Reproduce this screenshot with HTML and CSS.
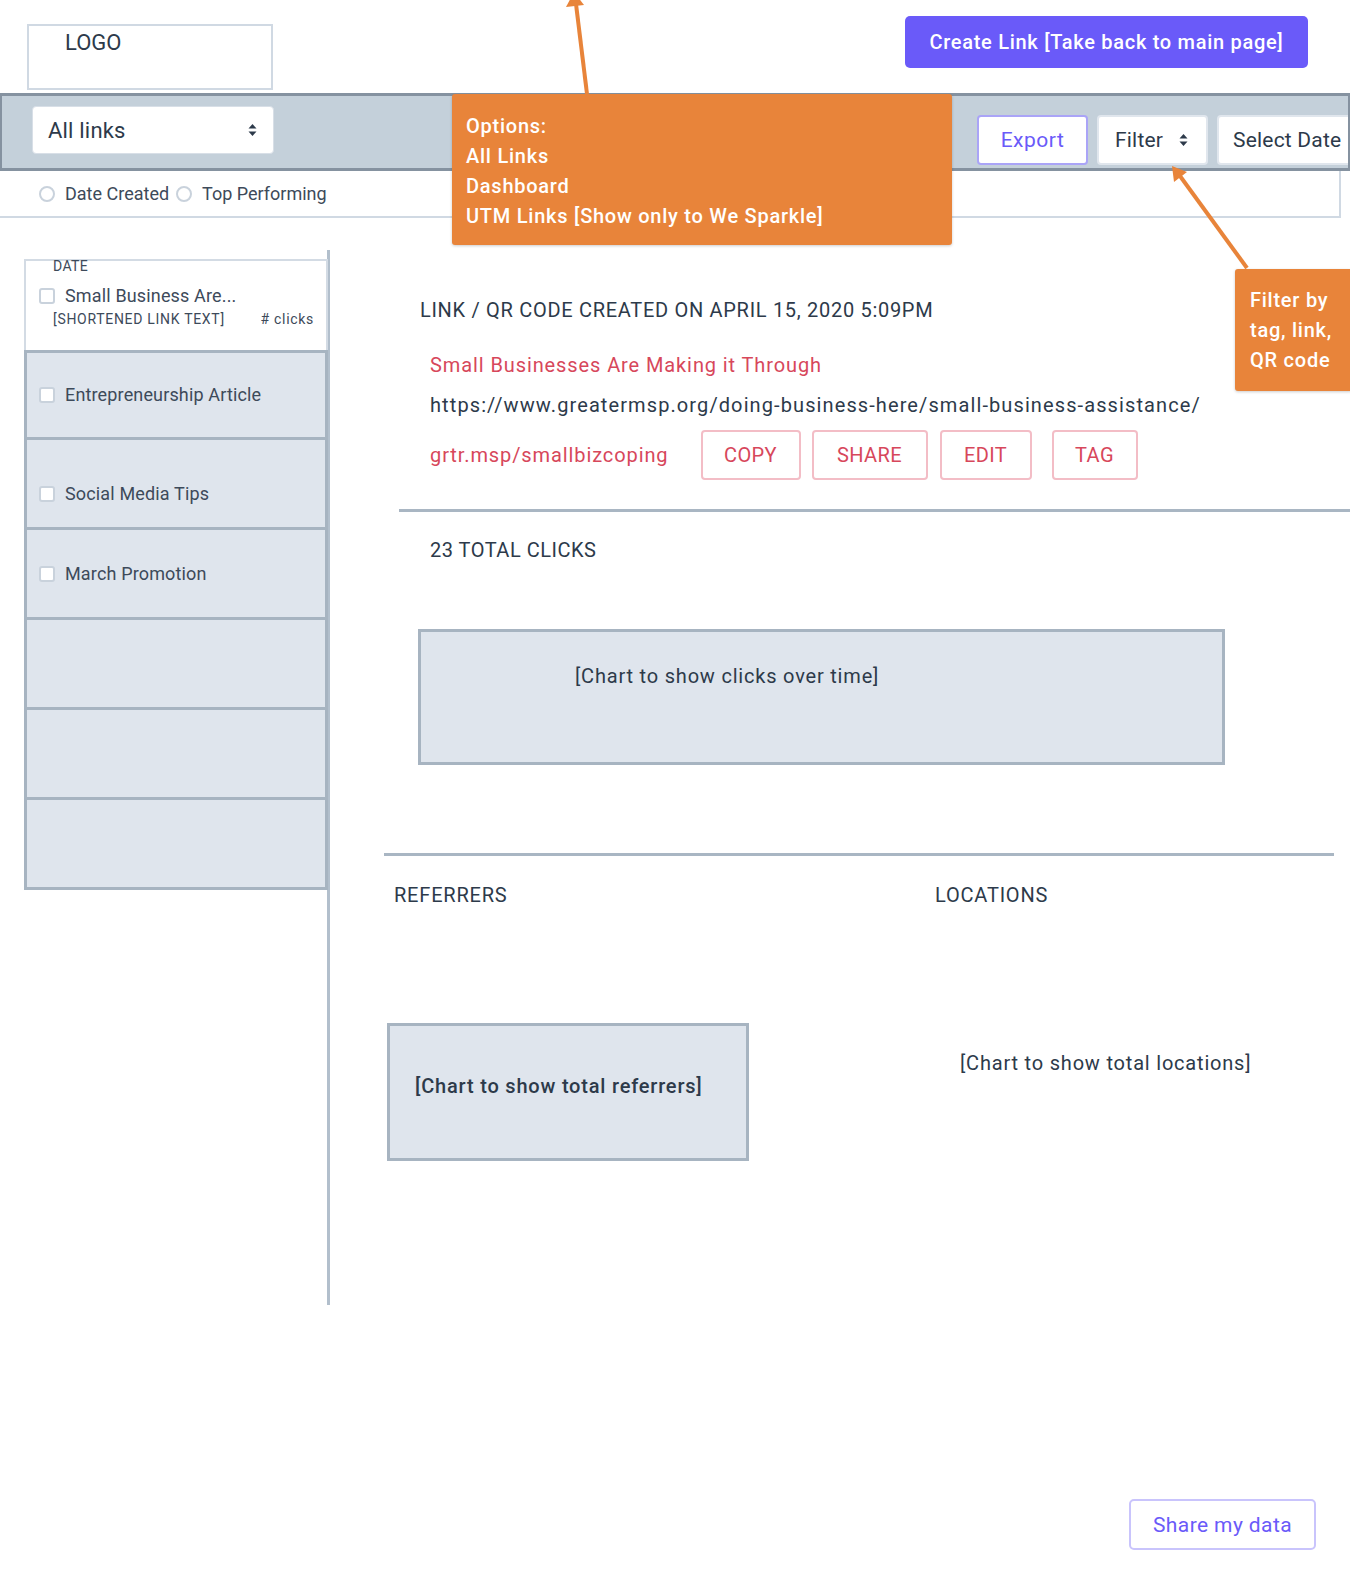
FILE: index.html
```html
<!DOCTYPE html>
<html lang="en">
<head>
<meta charset="utf-8">
<title>Link dashboard</title>
<link rel="stylesheet" href="styles.css">
</head>
<body>
<div class="page">
  <header class="topbar">
    <div class="logo">LOGO</div>
    <button class="btn-create">Create Link [Take back to main page]</button>
  </header>

  <div class="toolbar">
    <div class="select-links">
      <span>All links</span>
      <svg class="updown" width="9" height="14" viewBox="0 0 9 14"><path d="M4.5 1 L8.5 5.5 L0.5 5.5 Z M4.5 13 L8.5 8.5 L0.5 8.5 Z" fill="#2d3a4a"/></svg>
    </div>
    <div class="tool-group">
      <button class="tool-btn tool-export">Export</button>
      <button class="tool-btn tool-filter"><span>Filter</span><svg class="updown" width="9" height="14" viewBox="0 0 9 14"><path d="M4.5 1 L8.5 5.5 L0.5 5.5 Z M4.5 13 L8.5 8.5 L0.5 8.5 Z" fill="#2d3a4a"/></svg></button>
      <button class="tool-btn tool-date">Select Date</button>
    </div>
  </div>

  <div class="sortbar">
    <label class="radio"><span class="radio-dot"></span>Date Created</label>
    <label class="radio"><span class="radio-dot"></span>Top Performing</label>
  </div>

  <main class="main">
    <aside class="sidebar">
      <ul class="link-list">
        <li class="link-item link-item-active">
          <div class="item-date">DATE</div>
          <div class="item-row"><span class="checkbox"></span><span class="item-title">Small Business Are...</span></div>
          <div class="item-meta"><span>[SHORTENED LINK TEXT]</span><span># clicks</span></div>
        </li>
        <li class="link-item"><span class="checkbox"></span><span class="item-title">Entrepreneurship Article</span></li>
        <li class="link-item link-item-low"><span class="checkbox"></span><span class="item-title">Social Media Tips</span></li>
        <li class="link-item"><span class="checkbox"></span><span class="item-title">March Promotion</span></li>
        <li class="link-item"></li>
        <li class="link-item"></li>
        <li class="link-item"></li>
      </ul>
    </aside>

    <section class="content">
      <h2 class="created">LINK / QR CODE CREATED ON APRIL 15, 2020 5:09PM</h2>
      <div class="link-detail">
        <div class="link-title">Small Businesses Are Making it Through</div>
        <div class="link-url">https://www.greatermsp.org/doing-business-here/small-business-assistance/</div>
        <div class="short-row">
          <span class="short-link">grtr.msp/smallbizcoping</span>
          <button class="action-btn action-copy">COPY</button>
          <button class="action-btn action-share">SHARE</button>
          <button class="action-btn action-edit">EDIT</button>
          <button class="action-btn action-tag">TAG</button>
        </div>
      </div>
      <div class="divider divider-top"></div>
      <div class="total-clicks">23 TOTAL CLICKS</div>
      <div class="chart chart-clicks">[Chart to show clicks over time]</div>
      <div class="divider divider-stats"></div>
      <div class="stats">
        <div class="stats-col">
          <div class="stats-heading">REFERRERS</div>
          <div class="chart chart-referrers">[Chart to show total referrers]</div>
        </div>
        <div class="stats-col">
          <div class="stats-heading">LOCATIONS</div>
          <div class="chart-locations">[Chart to show total locations]</div>
        </div>
      </div>
    </section>
  </main>

  <footer class="footer">
    <button class="btn-share">Share my data</button>
  </footer>

  <div class="callout callout-options">
    <div>Options:</div>
    <div>All Links</div>
    <div>Dashboard</div>
    <div>UTM Links [Show only to We Sparkle]</div>
  </div>
  <div class="callout callout-filter">
    <div>Filter by</div>
    <div>tag, link,</div>
    <div>QR code</div>
  </div>

  <svg class="arrows" width="1350" height="400" viewBox="0 0 1350 400">
    <line x1="587" y1="94" x2="576" y2="4" stroke="#e8843a" stroke-width="4"/>
    <polygon points="574,-8 566,7 584,5" fill="#e8843a"/>
    <line x1="1247" y1="268" x2="1180" y2="176" stroke="#e8843a" stroke-width="4"/>
    <polygon points="1172,166 1174,182 1187,172" fill="#e8843a"/>
  </svg>
</div>
</body>
</html>
```

FILE: styles.css
```css
* { box-sizing: border-box; }

html, body {
  margin: 0;
  padding: 0;
  background: #ffffff;
}

body {
  font-family: Roboto, "Noto Sans", "Liberation Sans", sans-serif;
  color: #2d3a4a;
}

.page {
  position: relative;
  width: 1350px;
  min-height: 1585px;
  overflow: hidden;
}

button {
  font-family: inherit;
  cursor: pointer;
}

/* header */
.topbar {
  display: flex;
  justify-content: space-between;
  align-items: flex-start;
  height: 93px;
  padding: 0 42px 0 27px;
}

.logo {
  margin-top: 24px;
  width: 246px;
  height: 66px;
  border: 2px solid #d0d9e3;
  padding: 4px 0 0 36px;
  font-size: 22px;
  line-height: 26px;
  color: #2d3a4a;
}

.btn-create {
  margin-top: 16px;
  width: 403px;
  height: 52px;
  border: none;
  border-radius: 5px;
  background: #6a5af9;
  color: #ffffff;
  font-size: 20px;
  font-weight: 500;
  letter-spacing: 0.7px;
}

/* toolbar */
.toolbar {
  display: flex;
  align-items: flex-start;
  height: 78px;
  background: #c4d0da;
  border-top: 3px solid #8592a0;
  border-bottom: 3px solid #8592a0;
  border-left: 2px solid #8592a0;
  border-right: 2px solid #8592a0;
  padding-left: 30px;
  overflow: hidden;
}

.select-links {
  margin-top: 10px;
  width: 242px;
  height: 48px;
  background: #ffffff;
  border: 1px solid #d8dfe7;
  border-radius: 4px;
  display: flex;
  align-items: center;
  justify-content: space-between;
  padding: 0 16px 0 15px;
  font-size: 22px;
  letter-spacing: 0.2px;
}

.updown { display: block; }

.tool-group {
  display: flex;
  gap: 9px;
  margin-left: auto;
  margin-right: -12px;
  margin-top: 19px;
  flex-shrink: 0;
}

.tool-btn {
  height: 50px;
  background: #ffffff;
  border: 2px solid #e0e6ed;
  border-radius: 4px;
  font-size: 21px;
  color: #2d3a4a;
  padding: 0;
  flex-shrink: 0;
  letter-spacing: 0.2px;
}

.tool-export {
  width: 111px;
  border-color: #aaa4f7;
  color: #6a5af9;
  letter-spacing: 0.5px;
}

.tool-filter {
  width: 111px;
  display: flex;
  align-items: center;
  justify-content: space-between;
  padding: 0 18px 0 16px;
}

.tool-date {
  width: 143px;
  text-align: left;
  padding-left: 14px;
}

/* sort bar */
.sortbar {
  width: 1341px;
  height: 47px;
  display: flex;
  align-items: center;
  gap: 7px;
  padding-left: 39px;
  border-bottom: 2px solid #d0d9e3;
  border-right: 2px solid #d0d9e3;
  font-size: 18px;
  color: #3d4a5a;
}

.radio {
  display: flex;
  align-items: center;
  gap: 10px;
}

.radio-dot {
  width: 16px;
  height: 16px;
  border-radius: 50%;
  border: 2px solid #c9d2dc;
  background: #ffffff;
}

/* main layout */
.main {
  display: flex;
  align-items: flex-start;
}

.sidebar {
  width: 330px;
  flex-shrink: 0;
  margin-top: 32px;
  height: 1055px;
  border-right: 3px solid #b2bfcc;
  padding: 9px 0 0 24px;
}

.link-list {
  list-style: none;
  margin: 0;
  padding: 0;
  width: 304px;
}

.link-item {
  height: 90px;
  background: #dfe5ed;
  border: 3px solid #a7b4c1;
  border-top: none;
  display: flex;
  align-items: center;
  padding-left: 12px;
  gap: 10px;
  font-size: 18px;
  color: #3d4a5a;
}

.link-item-active + .link-item {
  border-top: 3px solid #a7b4c1;
}

.link-item-low {
  padding-top: 20px;
}

.link-item-active {
  display: block;
  height: 91px;
  background: #ffffff;
  border: 2px solid #d3dbe4;
  border-bottom: none;
  padding: 0 12px 0 13px;
}

.checkbox {
  width: 16px;
  height: 16px;
  border: 2px solid #c9d2dc;
  border-radius: 3px;
  background: #ffffff;
  flex-shrink: 0;
}

.item-title {
  line-height: 20px;
  letter-spacing: 0.15px;
}

.item-date {
  padding-left: 14px;
  font-size: 14px;
  line-height: 16px;
  margin-top: -3px;
  letter-spacing: 0.4px;
}

.item-row {
  display: flex;
  align-items: center;
  gap: 10px;
  margin-top: 12px;
}

.item-meta {
  display: flex;
  justify-content: space-between;
  padding-left: 14px;
  margin-top: 5px;
  font-size: 14px;
  line-height: 16px;
  letter-spacing: 0.7px;
}

/* content */
.content {
  flex: 1;
  padding-top: 80px;
  font-size: 20px;
  line-height: 24px;
  letter-spacing: 0.9px;
}

.created {
  margin: 0 0 0 90px;
  font-size: 20px;
  font-weight: 400;
  line-height: 24px;
  letter-spacing: 0.7px;
}

.link-detail {
  margin: 31px 0 0 100px;
}

.link-title {
  color: #d7475b;
}

.link-url {
  margin-top: 16px;
  letter-spacing: 1.1px;
}

.short-row {
  display: flex;
  align-items: center;
  margin-top: 13px;
  height: 50px;
}

.short-link {
  color: #d7475b;
  margin-right: 32px;
}

.action-btn {
  height: 50px;
  background: #ffffff;
  border: 2px solid #f3bdc6;
  border-radius: 4px;
  color: #d7475b;
  font-size: 20px;
  padding: 0;
  letter-spacing: 0.4px;
}

.action-copy { width: 100px; }
.action-share { width: 116px; margin-left: 11px; }
.action-edit { width: 92px; margin-left: 12px; }
.action-tag { width: 86px; margin-left: 20px; }

.divider {
  height: 3px;
  background: #a9b6c3;
}

.divider-top {
  margin: 29px 0 0 69px;
}

.total-clicks {
  margin: 26px 0 0 100px;
  letter-spacing: 0.5px;
}

.chart {
  background: #dfe5ed;
  border: 3px solid #a7b4c1;
  font-weight: 500;
  letter-spacing: 0.8px;
}

.chart-clicks {
  margin: 67px 0 0 88px;
  width: 807px;
  height: 136px;
  padding: 32px 0 0 154px;
  font-weight: 400;
}

.divider-stats {
  margin: 88px 16px 0 54px;
}

.stats {
  display: grid;
  grid-template-columns: 541px 1fr;
  margin: 27px 0 0 57px;
}

.stats-heading {
  padding-left: 7px;
  letter-spacing: 0.8px;
}

.chart-referrers {
  margin-top: 116px;
  width: 362px;
  height: 138px;
  padding: 48px 0 0 25px;
}

.chart-locations {
  margin: 144px 0 0 32px;
  letter-spacing: 0.8px;
}

/* footer */
.footer {
  display: flex;
  justify-content: flex-end;
  padding: 194px 34px 0 0;
}

.btn-share {
  width: 187px;
  height: 51px;
  background: #ffffff;
  border: 2px solid #c9c4fc;
  border-radius: 5px;
  color: #6a5af9;
  font-size: 21px;
  letter-spacing: 0.4px;
}

/* annotations */
.callout {
  position: absolute;
  background: #e8843a;
  color: #ffffff;
  font-size: 20px;
  font-weight: 500;
  line-height: 30px;
  letter-spacing: 0.75px;
  border-radius: 3px;
  box-shadow: 0 1px 3px rgba(0, 0, 0, 0.2);
  z-index: 2;
}

.callout-options {
  left: 452px;
  top: 94px;
  width: 500px;
  height: 151px;
  padding: 17px 14px;
}

.callout-filter {
  left: 1235px;
  top: 269px;
  width: 118px;
  height: 122px;
  padding: 16px 0 0 15px;
}

.arrows {
  position: absolute;
  left: 0;
  top: 0;
  pointer-events: none;
  z-index: 3;
  overflow: visible;
}
```
